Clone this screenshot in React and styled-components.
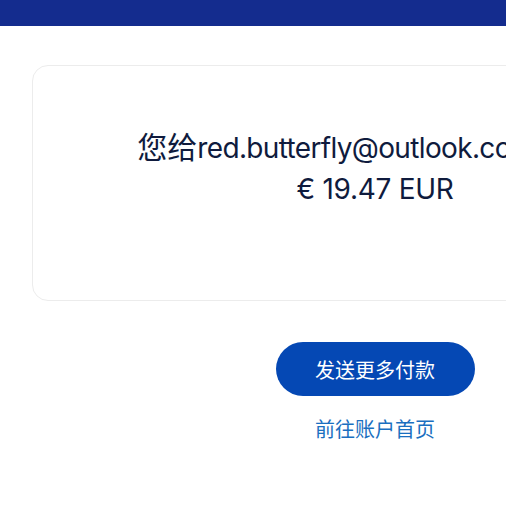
import React from "react";
import styled, { createGlobalStyle } from "styled-components";

const Global = createGlobalStyle`
  html, body { margin: 0; padding: 0; background: #ffffff; overflow: hidden; }
  body { font-family: "Inter", "Noto Sans CJK SC", sans-serif; }
`;

const Page = styled.div`
  width: 750px;
  display: flex;
  flex-direction: column;
  align-items: center;
`;

const TopBar = styled.header`
  width: 100%;
  height: 26px;
  background: #142c8e;
`;

const Card = styled.section`
  box-sizing: border-box;
  width: 686px;
  height: 236px;
  margin-top: 39px;
  border: 1px solid #ececec;
  border-radius: 16px;
  display: flex;
  flex-direction: column;
  align-items: center;
  padding-top: 62px;
`;

const Line = styled.div`
  font-size: 28px;
  line-height: 40px;
  height: 40px;
  color: #0f1b3d;
  white-space: nowrap;
  letter-spacing: ${(p) => (p.$tight ? -0.65 : -0.3)}px;
  margin-top: ${(p) => (p.$tight ? 0 : 1)}px;
`;

const Cjk = styled.span`
  font-family: "Noto Sans CJK SC", sans-serif;
  font-size: ${(p) => p.$size || 30}px;
  line-height: 1;
  font-weight: 400;
  letter-spacing: 0;
`;

const Actions = styled.div`
  display: flex;
  flex-direction: column;
  align-items: center;
  margin-top: 41px;
  gap: 20px;
`;

const Button = styled.button`
  width: 199px;
  height: 54px;
  border: none;
  border-radius: 27px;
  background: #0548b4;
  color: #ffffff;
  font-family: "Noto Sans CJK SC", sans-serif;
  font-size: 20px;
  cursor: pointer;
`;

const Link = styled.a`
  color: #1a6fc0;
  font-family: "Noto Sans CJK SC", sans-serif;
  font-size: 20px;
  line-height: 26px;
  text-decoration: none;
`;

export default function App() {
  return (
    <>
      <Global />
      <Page>
        <TopBar />
        <Card>
          <Line $tight>
            <Cjk>您给</Cjk>red.butterfly@outlook.com<Cjk $size={26}>发送了</Cjk>
          </Line>
          <Line>€ 19.47 EUR</Line>
        </Card>
        <Actions>
          <Button>发送更多付款</Button>
          <Link href="#">前往账户首页</Link>
        </Actions>
      </Page>
    </>
  );
}
